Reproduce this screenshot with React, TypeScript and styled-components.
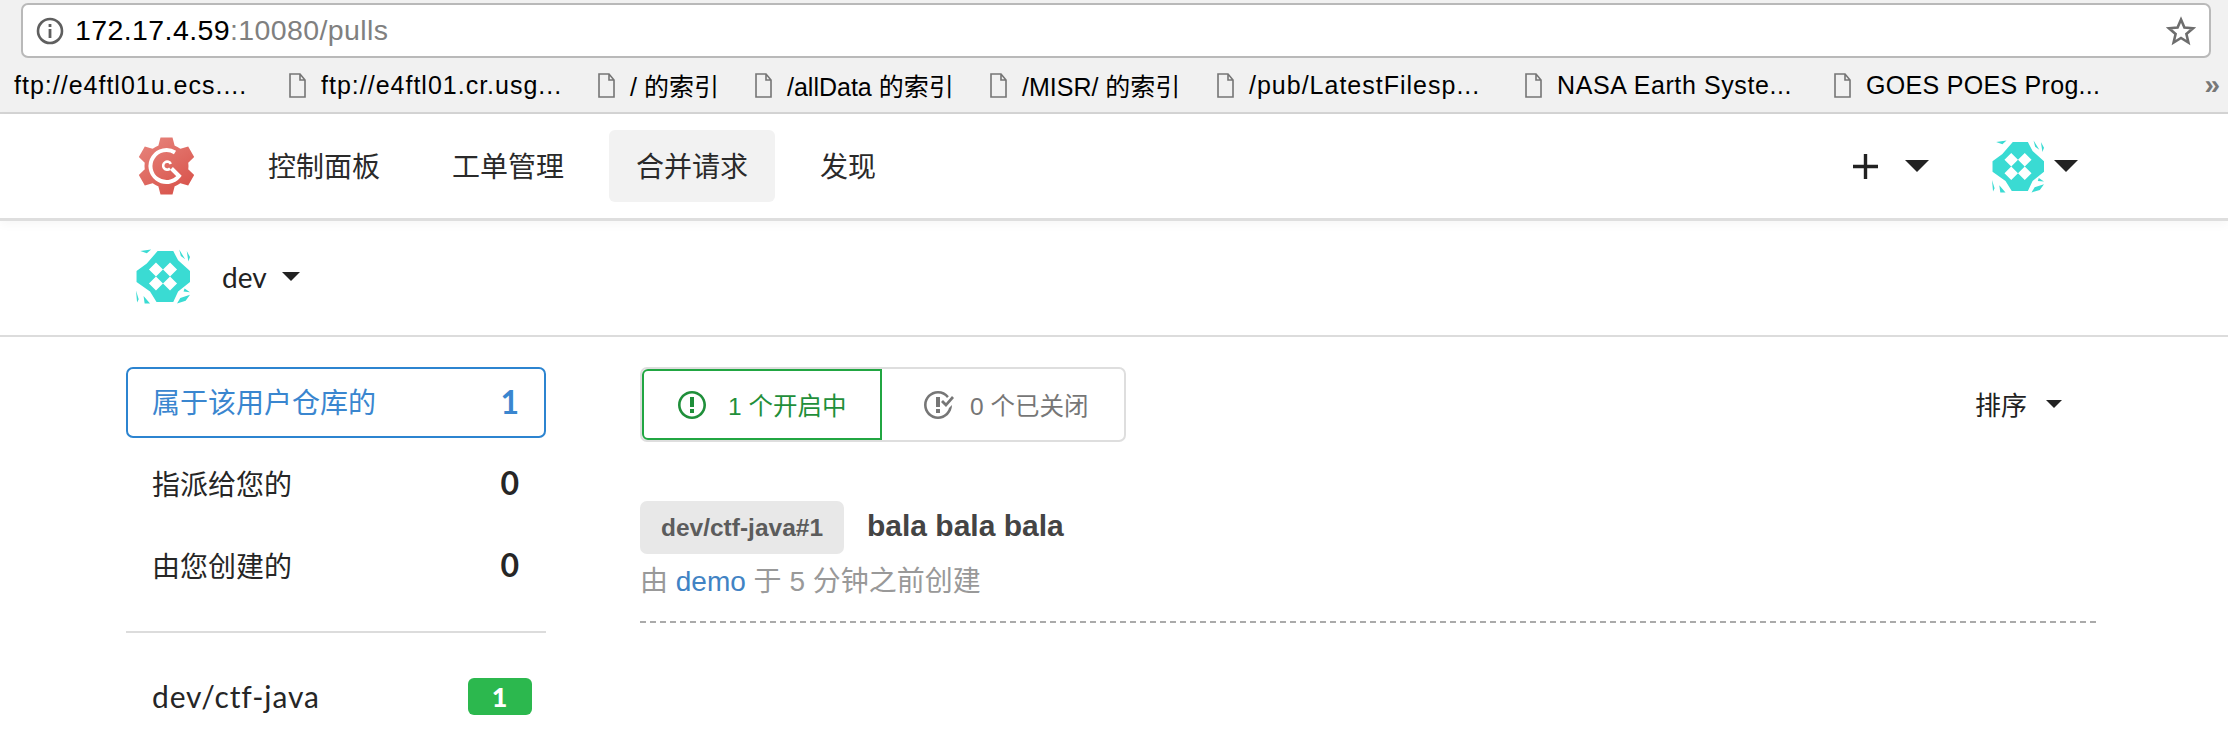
import React from "react";
import styled, { createGlobalStyle } from "styled-components";

const Global = createGlobalStyle`
  html, body { margin: 0; padding: 0; background: #fff; }
  body { width: 2228px; height: 754px; overflow: hidden; font-family: "Liberation Sans", "Noto Sans CJK SC", sans-serif; }
  * { box-sizing: border-box; }
`;

const Chrome = styled.div`
  height: 114px;
  background: #f1f1f1;
  border-bottom: 2px solid #d4d4d4;
  padding-top: 3px;
`;
const AddressBox = styled.div`
  margin: 0 17px 0 21px;
  height: 55px;
  background: #fff;
  border: 2px solid #b9b9b9;
  border-radius: 7px;
  display: flex;
  align-items: center;
  padding: 0 13px 0 13px;
`;
const Url = styled.div`
  margin-left: 11px;
  font-size: 28.5px;
  letter-spacing: 0.4px;
  color: #000;
  flex: 1;
`;
const UrlRest = styled.span`
  color: #808080;
`;
const BookmarkBar = styled.div`
  height: 54px;
  display: flex;
  align-items: center;
  padding-left: 14px;
  position: relative;
`;
const Bookmark = styled.div<{ $w: number; $ls?: number }>`
  width: ${(p) => p.$w}px;
  flex: none;
  display: flex;
  align-items: center;
  gap: 15px;
  font-size: 25px;
  letter-spacing: ${(p) => p.$ls ?? 0.5}px;
  color: #000;
  white-space: nowrap;
`;
const More = styled.div`
  margin-left: auto;
  margin-right: 8px;
  font-size: 28px;
  line-height: 28px;
  font-weight: 700;
  color: #777;
`;

const Nav = styled.div`
  height: 107px;
  display: flex;
  align-items: center;
  border-bottom: 3px solid #dedede;
  padding: 0 150px 0 138px;
  box-shadow: 0 3px 10px rgba(0, 0, 0, 0.04);
  position: relative;
`;
const Logo = styled.svg`
  width: 57px;
  height: 60px;
  flex: none;
  margin-right: 46px;
`;
const NavItem = styled.div<{ $active?: boolean }>`
  height: 72px;
  padding: 0 27px 3px;
  margin-right: 18px;
  border-radius: 6px;
  display: flex;
  align-items: center;
  font-size: 28px;
  color: #2a2a2a;
  background: ${(p) => (p.$active ? "#f2f2f2" : "transparent")};
`;
const NavRight = styled.div`
  margin-left: auto;
  display: flex;
  align-items: center;
`;
const Tri = styled.i<{ $w: number; $h: number; $ml: number }>`
  display: block;
  flex: none;
  margin-left: ${(p) => p.$ml}px;
  width: 0;
  height: 0;
  border-left: ${(p) => p.$w / 2}px solid transparent;
  border-right: ${(p) => p.$w / 2}px solid transparent;
  border-top: ${(p) => p.$h}px solid #222;
`;
const Plus = styled.svg`
  width: 25px;
  height: 25px;
  flex: none;
`;
const NavAvatar = styled.svg`
  width: 52px;
  height: 53px;
  flex: none;
  margin-left: 63px;
`;

const UserRow = styled.div`
  height: 116px;
  display: flex;
  align-items: center;
  padding: 0 0 3px 136px;
  border-bottom: 2px solid #dcdcdc;
`;
const UserAvatar = styled.svg`
  width: 54px;
  height: 55px;
  flex: none;
  margin-right: 32px;
`;
const UserName = styled.div`
  font-family: Lato, "Noto Sans CJK SC", sans-serif;
  font-size: 28px;
  color: #222;
`;

const Main = styled.div`
  display: flex;
  padding: 30px 132px 0 126px;
  align-items: flex-start;
`;
const Sidebar = styled.div`
  width: 420px;
  flex: none;
  font-family: Lato, "Noto Sans CJK SC", sans-serif;
`;
const FilterItem = styled.div<{ $active?: boolean }>`
  height: ${(p) => (p.$active ? 71 : 82)}px;
  margin-bottom: ${(p) => (p.$active ? 5 : 0)}px;
  border: ${(p) => (p.$active ? "2px solid #2c84d0" : "none")};
  border-radius: 7px;
  padding: 0 ${(p) => (p.$active ? 25 : 27)}px 3px ${(p) => (p.$active ? 24 : 26)}px;
  display: flex;
  align-items: center;
  justify-content: space-between;
  font-size: 28px;
  color: ${(p) => (p.$active ? "#3a86cf" : "#262626")};
`;
const Count = styled.b`
  font-size: 32px;
  font-weight: 700;
`;
const Divider = styled.div`
  height: 2px;
  margin: 24px 0 0;
  background: #dcdcdc;
`;
const RepoItem = styled.div`
  height: 84px;
  margin-top: 21px;
  padding: 0 14px 0 26px;
  display: flex;
  align-items: center;
  justify-content: space-between;
  font-size: 30px;
  letter-spacing: 0.9px;
  color: #262626;
`;
const Badge = styled.div`
  width: 64px;
  height: 37px;
  border-radius: 6px;
  background: #2cb84e;
  color: #fff;
  font-size: 27px;
  font-weight: 900;
  display: flex;
  align-items: center;
  justify-content: center;
`;

const Content = styled.div`
  margin-left: 94px;
  flex: 1;
`;
const TopBar = styled.div`
  display: flex;
  align-items: center;
  justify-content: space-between;
  height: 75px;
  padding-right: 34px;
`;
const Tabs = styled.div`
  width: 486px;
  height: 75px;
  display: flex;
  border: 2px solid #dedede;
  border-radius: 7px;
`;
const Tab = styled.div<{ $active?: boolean }>`
  width: ${(p) => (p.$active ? "240px" : "auto")};
  flex: ${(p) => (p.$active ? "none" : "1")};
  height: 71px;
  display: flex;
  align-items: center;
  padding-left: ${(p) => (p.$active ? 34 : 40)}px;
  gap: ${(p) => (p.$active ? 22 : 16)}px;
  font-size: 24.5px;
  color: ${(p) => (p.$active ? "#1f8f3a" : "#767676")};
  border: ${(p) => (p.$active ? "2px solid #21a642" : "none")};
  border-radius: ${(p) => (p.$active ? "6px 0 0 6px" : "0")};
`;
const TabIcon = styled.svg`
  height: 32px;
  width: auto;
  flex: none;
  fill: currentColor;
`;
const Sort = styled.div`
  display: flex;
  align-items: center;
  padding-bottom: 2px;
  font-size: 26px;
  color: #222;
`;
const Issue = styled.div`
  margin-top: 59px;
  height: 122px;
  border-bottom: 2px dashed #aaa;
`;
const IssueHead = styled.div`
  display: flex;
  align-items: center;
  height: 53px;
`;
const IssueLabel = styled.div`
  width: 204px;
  height: 53px;
  border-radius: 7px;
  background: #e8e8e8;
  color: #5c5c5c;
  font-size: 24.5px;
  font-weight: 700;
  display: flex;
  align-items: center;
  justify-content: center;
`;
const IssueTitle = styled.div`
  margin-left: 23px;
  font-size: 30px;
  font-weight: 700;
  color: #444;
  position: relative;
  top: -2px;
`;
const Meta = styled.div`
  margin-top: 10px;
  font-size: 28px;
  line-height: 36px;
  color: #999;
  white-space: pre;
`;
const MetaLink = styled.span`
  color: #4183c4;
`;

function FileIcon() {
  return (
    <svg width="17" height="25" viewBox="0 0 17 25" style={{ flex: "none" }}>
      <path d="M1 1h10l5 6v17H1z M11 1v6h5" fill="none" stroke="#757575" strokeWidth="1.6" />
    </svg>
  );
}

function Identicon() {
  const c = "#3adbd3";
  return (
    <>
      <path
        fill={c}
        fillRule="evenodd"
        d="M32 12 40 3H69L78 20 100 40V60L78 78 69 97H38L26 78 1 60V40L20 26ZM37 24 24 37 37 50 50 37ZM63 24 50 37 63 50 76 37ZM37 50 24 63 37 76 50 63ZM63 50 50 63 63 76 76 63Z"
      />
      <path
        fill={c}
        d="M8 3 28 0 20 7ZM80 0 91 18 83 12ZM94 3 100 14 97 22ZM0 76 5 92 2 98ZM14 86 26 100H16ZM82 90 100 84 92 95 76 100ZM90 72 100 79 88 78Z"
      />
    </>
  );
}

export default function App() {
  const teeth = [0, 60, 120, 180, 240, 300];
  return (
    <>
      <Global />
      <Chrome>
        <AddressBox>
          <svg width="28" height="28" viewBox="0 0 28 28" style={{ flex: "none" }}>
            <circle cx="14" cy="14" r="12" fill="none" stroke="#5f5f5f" strokeWidth="2.6" />
            <rect x="12.6" y="12" width="2.8" height="9" fill="#5f5f5f" />
            <rect x="12.6" y="7" width="2.8" height="3" fill="#5f5f5f" />
          </svg>
          <Url>
            172.17.4.59<UrlRest>:10080/pulls</UrlRest>
          </Url>
          <svg width="30" height="30" viewBox="0 0 30 30" style={{ flex: "none" }}>
            <path
              d="M15 3.5 18.4 11.6 27 12.3 20.4 18 22.4 26.5 15 22 7.600 26.5 9.600 18 3 12.300 11.600 11.600Z"
              fill="none"
              stroke="#6e6e6e"
              strokeWidth="2.6"
            />
          </svg>
        </AddressBox>
        <BookmarkBar>
          <Bookmark $w={275} $ls={1}>ftp://e4ftl01u.ecs....</Bookmark>
          <Bookmark $w={309} $ls={1}>
            <FileIcon />
            ftp://e4ftl01.cr.usg...
          </Bookmark>
          <Bookmark $w={157} $ls={0}>
            <FileIcon />/ 的索引
          </Bookmark>
          <Bookmark $w={235} $ls={0}>
            <FileIcon />
            /allData 的索引
          </Bookmark>
          <Bookmark $w={227} $ls={0}>
            <FileIcon />
            /MISR/ 的索引
          </Bookmark>
          <Bookmark $w={308} $ls={1}>
            <FileIcon />
            /pub/LatestFilesp...
          </Bookmark>
          <Bookmark $w={309} $ls={0.6}>
            <FileIcon />
            NASA Earth Syste...
          </Bookmark>
          <Bookmark $w={280} $ls={0.3}>
            <FileIcon />
            GOES POES Prog...
          </Bookmark>
          <More>»</More>
        </BookmarkBar>
      </Chrome>
      <Nav>
        <Logo viewBox="0 0 57 60">
          <defs>
            <linearGradient id="gear" x1="0.2" y1="0" x2="0.8" y2="1">
              <stop offset="0" stopColor="#e6827a" />
              <stop offset="1" stopColor="#d8524a" />
            </linearGradient>
          </defs>
          <path
            fill="url(#gear)"
            fillRule="nonzero"
            d={
              "M28.500 8A22 22 0 1 1 28.490 8Z " +
              teeth
                .map((a) => {
                  const rad = (a * Math.PI) / 180;
                  const pt = (x: number, y: number) => {
                    const dx = x - 28.5;
                    const dy = y - 30;
                    return `${(28.5 + dx * Math.cos(rad) - dy * Math.sin(rad)).toFixed(2)} ${(30 + dx * Math.sin(rad) + dy * Math.cos(rad)).toFixed(2)}`;
                  };
                  return `M${pt(20, 11)} L${pt(22.5, 1.5)} L${pt(34.5, 1.5)} L${pt(37, 11)} Z`;
                })
                .join(" ")
            }
          />
          <path d="M37 16.500A16 16 0 1 0 41 40L33.500 32.500" fill="none" stroke="#fff" strokeWidth="4" />
          <path d="M32 32.500A4 4 0 1 1 32.800 28" fill="none" stroke="#fff" strokeWidth="2.600" />
        </Logo>
        <NavItem>控制面板</NavItem>
        <NavItem>工单管理</NavItem>
        <NavItem $active>合并请求</NavItem>
        <NavItem>发现</NavItem>
        <NavRight>
          <Plus viewBox="0 0 25 25">
            <path d="M0 10.800H25V14.200H0ZM10.800 0H14.200V25H10.800Z" fill="#222" />
          </Plus>
          <Tri $w={24} $h={12} $ml={27} />
          <NavAvatar viewBox="0 0 100 100">
            <Identicon />
          </NavAvatar>
          <Tri $w={24} $h={12} $ml={10} />
        </NavRight>
      </Nav>
      <UserRow>
        <UserAvatar viewBox="0 0 100 100">
          <Identicon />
        </UserAvatar>
        <UserName>dev</UserName>
        <Tri $w={18} $h={9} $ml={15} />
      </UserRow>
      <Main>
        <Sidebar>
          <FilterItem $active>
            属于该用户仓库的<Count>1</Count>
          </FilterItem>
          <FilterItem>
            指派给您的<Count>0</Count>
          </FilterItem>
          <FilterItem>
            由您创建的<Count>0</Count>
          </FilterItem>
          <Divider />
          <RepoItem>
            dev/ctf-java<Badge>1</Badge>
          </RepoItem>
        </Sidebar>
        <Content>
          <TopBar>
            <Tabs>
              <Tab $active>
                <TabIcon viewBox="0 0 14 16">
                  <path d="M7 2.300c3.140 0 5.700 2.560 5.700 5.700s-2.560 5.700-5.700 5.700A5.710 5.710 0 0 1 1.300 8c0-3.140 2.560-5.700 5.700-5.700zM7 1C3.140 1 0 4.140 0 8s3.140 7 7 7 7-3.140 7-7-3.140-7-7-7zm1 3H6v5h2V4zm0 6H6v2h2v-2z" />
                </TabIcon>
                1 个开启中
              </Tab>
              <Tab>
                <TabIcon viewBox="0 0 16 16">
                  <path d="M7 10h2v2H7v-2zm2-6H7v5h2V4zm1.500 1.500l-1 1L12 9l4-4.500-1-1L12 7l-1.500-1.500zM8 13.700A5.710 5.710 0 0 1 2.300 8c0-3.140 2.560-5.700 5.700-5.700 1.830 0 3.450.88 4.500 2.200l.92-.92A6.947 6.947 0 0 0 8 1C4.140 1 1 4.140 1 8s3.140 7 7 7 7-3.140 7-7l-1.520 1.520c-.66 2.410-2.860 4.190-5.480 4.190v-.01z" />
                </TabIcon>
                0 个已关闭
              </Tab>
            </Tabs>
            <Sort>
              排序
              <Tri $w={16} $h={8} $ml={19} />
            </Sort>
          </TopBar>
          <Issue>
            <IssueHead>
              <IssueLabel>dev/ctf-java#1</IssueLabel>
              <IssueTitle>bala bala bala</IssueTitle>
            </IssueHead>
            <Meta>
              由 <MetaLink>demo</MetaLink> 于 5 分钟之前创建
            </Meta>
          </Issue>
        </Content>
      </Main>
    </>
  );
}
